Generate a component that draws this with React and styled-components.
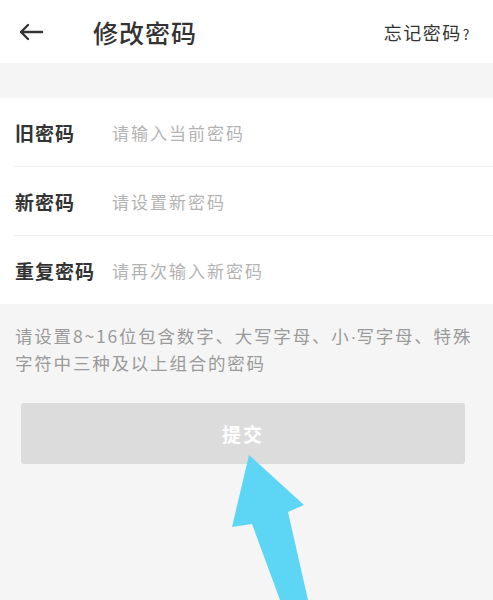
import React from "react"
import styled, { createGlobalStyle } from "styled-components"

const GlobalStyle = createGlobalStyle`
  html, body {
    margin: 0;
    padding: 0;
    background: #f5f5f5;
    font-family: "Noto Sans CJK SC", "Noto Sans", sans-serif;
  }
`

const Page = styled.div`
  position: relative;
  width: 493px;
  height: 600px;
  overflow: hidden;
  background: #f5f5f5;
`

const Header = styled.div`
  height: 63px;
  background: #fff;
  display: flex;
  align-items: center;
  padding: 0 22px 0 18px;
  box-sizing: border-box;
`

const Back = styled.div`
  width: 28px;
  height: 28px;
  display: flex;
  align-items: center;
  color: #333;
`

const Title = styled.div`
  margin-left: 47px;
  font-size: 25px;
  font-weight: 500;
  color: #333;
  letter-spacing: 1px;
  flex: 1;
`

const Forgot = styled.div`
  font-size: 18px;
  color: #333;
  letter-spacing: 1.5px;

  span {
    font-size: 14px;
    margin-left: 1px;
  }
`

const Form = styled.div`
  margin-top: 35px;
  background: #fff;
  padding-left: 14px;
`

const Row = styled.div`
  height: 68px;
  display: flex;
  align-items: center;
  border-top: ${p => (p.first ? "none" : "1px solid #f0f0f0")};
`

const Label = styled.div`
  width: 97px;
  padding-left: 1px;
  font-size: 19px;
  font-weight: 700;
  color: #333;
  letter-spacing: 1px;
`

const Placeholder = styled.div`
  font-size: 17px;
  color: #b3b3b3;
  letter-spacing: 2px;
`

const Hint = styled.div`
  padding: 19px 10px 0 15px;
  font-size: 17.5px;
  line-height: 26px;
  color: #9a9a9a;
  letter-spacing: 1.8px;
`

const Dot = styled.span`
  font-family: "Liberation Sans", sans-serif;
  letter-spacing: 0;
`

const Submit = styled.div`
  margin: 27px 28px 0 21px;
  height: 61px;
  border-radius: 3px;
  background: #dcdcdc;
  color: #fff;
  font-size: 19px;
  font-weight: 700;
  display: flex;
  align-items: center;
  justify-content: center;
  letter-spacing: 2px;
`

const Pointer = styled.svg`
  position: absolute;
  left: 0;
  top: 0;
  pointer-events: none;
`

const rows = [
  { label: "旧密码", hint: "请输入当前密码" },
  { label: "新密码", hint: "请设置新密码" },
  { label: "重复密码", hint: "请再次输入新密码" },
]

const App = () => (
  <Page>
    <GlobalStyle />
    <Header>
      <Back>
        <svg width="26" height="20" viewBox="0 0 26 20" fill="none" stroke="#333" strokeWidth="2.4" strokeLinecap="round" strokeLinejoin="round">
          <path d="M24 10H3M10 3L3 10l7 7" />
        </svg>
      </Back>
      <Title>修改密码</Title>
      <Forgot>忘记密码<span>?</span></Forgot>
    </Header>

    <Form>
      {rows.map((r, i) => (
        <Row key={r.label} first={i === 0}>
          <Label>{r.label}</Label>
          <Placeholder>{r.hint}</Placeholder>
        </Row>
      ))}
    </Form>

    <Hint>
      请设置8~16位包含数字、大写字母、小<Dot>·</Dot>写字母、特殊字符中三种及以上组合的密码
    </Hint>

    <Submit>提交</Submit>

    <Pointer width="493" height="600" viewBox="0 0 493 600">
      <polygon points="249,455 304,505 288,512 308,600 280,600 252,524 232,527" fill="#5dd6f5" />
    </Pointer>
  </Page>
)

export default App
